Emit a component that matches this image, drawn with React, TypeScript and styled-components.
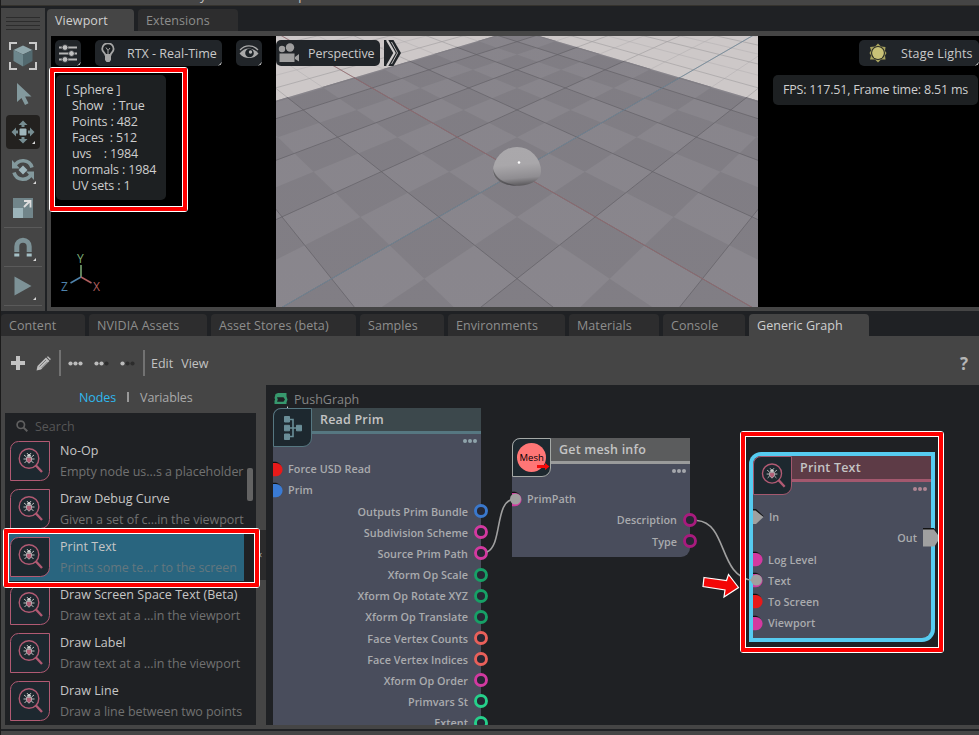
import React from 'react';
import styled, { createGlobalStyle, css } from 'styled-components';

const GlobalStyle = createGlobalStyle`
  * { box-sizing: border-box; }
  html, body { margin: 0; padding: 0; background: #1f2124; }
  body { font-family: "Open Sans", "Noto Sans", sans-serif; font-size: 12.5px; font-weight: 500; overflow: hidden; }
  svg { display: block; flex: none; }
`;

const Page = styled.div`
  position: relative;
  width: 979px;
  height: 735px;
  overflow: hidden;
  display: flex;
  flex-direction: column;
  background: #1f2124;
  border-left: 1px solid #1b1b1b;
`;

/* ---------- frame ---------- */
const MenuStrip = styled.div`
  height: 6px;
  flex: none;
  overflow: hidden;
  background: #454545;
  border-bottom: 1px solid #35332e;
  color: #c8c8c8;
  display: flex;
  padding-left: 199px;
  gap: 92px;
  line-height: 14px;
  span { margin-top: -11px; }
`;

const Upper = styled.div`
  height: 303px;
  margin-top: 2px;
  flex: none;
  display: flex;
  gap: 2px;
`;

const ToolColumn = styled.div`
  width: 44px;
  background: #454545;
  display: flex;
  flex-direction: column;
  align-items: center;
  padding-top: 9px;
`;

const Grip = styled.div`
  width: 34px;
  height: 14px;
  margin-bottom: 8px;
  background: repeating-linear-gradient(#2c2c2c 0 1px, #454545 1px 4px);
`;

const ToolButton = styled.div<{ $active?: boolean; $h?: number }>`
  width: 34px;
  height: ${p => p.$h ?? 38}px;
  display: flex;
  align-items: center;
  justify-content: center;
  ${p => p.$active && css`background: #23211f; border-radius: 4px;`}
`;

const ToolDivider = styled.div`
  width: 38px;
  height: 1px;
  background: #5a5a5a;
`;

const ViewportPanel = styled.div`
  flex: 1;
  display: flex;
  flex-direction: column;
`;

const TabRow = styled.div<{ $h: number }>`
  height: ${p => p.$h}px;
  flex: none;
  display: flex;
  align-items: flex-end;
  gap: 4px;
`;

const Tab = styled.div<{ $w: number; $on?: boolean }>`
  width: ${p => p.$w}px;
  height: 22px;
  padding-left: 8px;
  line-height: 23px;
  letter-spacing: 0.08px;
  white-space: nowrap;
  border-radius: 4px 4px 0 0;
  background: ${p => (p.$on ? '#454545' : '#2d2d2e')};
  color: ${p => (p.$on ? '#cfcfcf' : '#8d8d8d')};
`;

const ViewFrame = styled.div`
  flex: 1;
  background: #454545;
  padding: 5px 0 4px 4px;
`;

const View = styled.div`
  position: relative;
  height: 271px;
  background: #000;
  padding-left: 225px;
`;

const Hud = styled.div`
  position: absolute;
  inset: 0;
  padding: 4px 0 0 4px;
`;

const HudBar = styled.div`
  display: flex;
  height: 26px;
  gap: 14px;
`;

const Pill = styled.div<{ $w: number; $corner?: boolean }>`
  position: relative;
  width: ${p => p.$w}px;
  height: 26px;
  flex: none;
  display: flex;
  align-items: center;
  gap: 10px;
  border-radius: 5px;
  background: #212529;
  color: #c9c9c9;
  white-space: nowrap;
  overflow: hidden;
  ${p => p.$corner && css`
    &::after {
      content: '';
      position: absolute;
      right: 0;
      bottom: 0;
      border: 2.5px solid;
      border-color: transparent #e6e6e6 #e6e6e6 transparent;
    }
  `}
`;
const IconPill = styled(Pill)`justify-content: center;`;
const RtxPill = styled(Pill)`padding-left: 6px; gap: 12px;`;
const CameraPill = styled(Pill)`padding-left: 1px; gap: 9px; letter-spacing: -0.05px;`;
const LightPill = styled(Pill)`padding-left: 9px; gap: 13px; letter-spacing: 0.15px;`;
const CameraGroup = styled.div`display: flex; gap: 4px;`;
const Spring = styled.div`flex: 1;`;

const HudInfo = styled.div`
  display: flex;
  justify-content: space-between;
  align-items: flex-start;
  margin-top: 9px;
  padding: 0 1px;
`;

const Info = styled.div`
  width: 110px;
  height: 125px;
  padding: 7px 0 0 10px;
  border-radius: 5px;
  background: #1d2022;
  color: #cecece;
  line-height: 16px;
  letter-spacing: -0.15px;
  white-space: pre;
`;
const InfoLine = styled.div<{ $in?: boolean }>`padding-left: ${p => (p.$in ? 6 : 0)}px;`;

const Fps = styled.div`
  width: 205px;
  height: 30px;
  line-height: 29px;
  padding-left: 10px;
  border-radius: 5px;
  background: #1d2022;
  color: #cecece;
  letter-spacing: -0.2px;
  white-space: nowrap;
`;

const Gizmo = styled.div`
  position: absolute;
  left: 8px;
  bottom: 14px;
`;

/* ---------- graph panel ---------- */
const Lower = styled.div`
  height: 393px;
  flex: none;
  background: #454545;
  display: flex;
  flex-direction: column;
`;

const GraphBar = styled.div`
  height: 49px;
  flex: none;
  display: flex;
  align-items: center;
  padding: 5px 11px 0 10px;
  color: #c2c2c2;
`;
const Sep = styled.div`width: 2px; height: 26px; background: #727272;`;
const MenuLabel = styled.span<{ $ml: number }>`margin-left: ${p => p.$ml}px;`;
const Slot = styled.div<{ $ml: number }>`margin-left: ${p => p.$ml}px;`;
const Help = styled.span`margin-left: auto; font-weight: 700; font-size: 17px; color: #b5b5b5;`;

const GraphBody = styled.div`
  height: 340px;
  display: flex;
`;

const Side = styled.div`
  width: 265px;
  display: flex;
  flex-direction: column;
  position: relative;
`;
const SideTabs = styled.div`
  height: 28px;
  padding-left: 78px;
  display: flex;
  gap: 11px;
  line-height: 26px;
  letter-spacing: -0.1px;
  color: #a9a9a9;
  b { font-weight: 500; color: #2fb8ee; }
  i { width: 2px; height: 10px; margin-top: 7px; background: #999; }
`;
const Palette = styled.div`
  width: 251px;
  height: 312px;
  margin-left: 4px;
  background: #1f2124;
  overflow: hidden;
  position: relative;
`;
const Search = styled.div`
  height: 24px;
  padding: 2px 0 0 11px;
  display: flex;
  align-items: center;
  gap: 7px;
  color: #565656;
`;
const Item = styled.div<{ $on?: boolean }>`
  height: 48px;
  width: 239px;
  padding: 4px 0 4px 5px;
  display: flex;
  gap: 10px;
  white-space: nowrap;
  background: ${p => (p.$on ? '#29657f' : 'transparent')};
  color: #c6c6c6;
`;
const Title = styled.div`
  line-height: 20px;
  letter-spacing: 0.03px;
`;
const Sub = styled.div<{ $on?: boolean }>`
  line-height: 22px;
  letter-spacing: -0.05px;
  color: ${p => (p.$on ? '#64777e' : '#717171')};
`;
const Thumb = styled.div`
  position: absolute;
  right: 3px;
  top: 55px;
  width: 6px;
  height: 33px;
  border-radius: 2px;
  background: #636363;
`;
const Collapse = styled.div`
  position: absolute;
  right: 0;
  top: 145px;
  width: 7px;
  height: 50px;
  background: #2b2b2c;
  color: #aaa;
  font-size: 10px;
  line-height: 48px;
`;

const Canvas = styled.div`
  flex: 1;
  position: relative;
  overflow: hidden;
  background: #1f2124;
`;
const Crumb = styled.div`
  display: flex;
  gap: 6px;
  padding: 8px 0 0 8px;
  color: #858585;
  line-height: 14px;
`;
const Wires = styled.svg`
  position: absolute;
  left: 0;
  top: 0;
`;

const NodeBox = styled.div<{ $x: number; $y: number; $w: number; $h: number; $sel?: boolean }>`
  position: absolute;
  left: ${p => p.$x}px;
  top: ${p => p.$y}px;
  width: ${p => p.$w}px;
  height: ${p => p.$h}px;
  background: #494d5c;
  border-radius: 8px 0 9px 0;
  ${p => p.$sel && css`box-shadow: 0 0 0 4px #56cbf0;`}
`;
const Head = styled.div<{ $bg: string; $line: string }>`
  height: 26px;
  margin-left: 39px;
  padding-left: 8px;
  background: ${p => p.$bg};
  border-bottom: 3px solid ${p => p.$line};
  color: #c4c4c4;
  font-weight: 600;
  font-size: 12.5px;
  letter-spacing: 0.2px;
  line-height: 23px;
`;
const Badge = styled.div<{ $c: string }>`
  position: absolute;
  left: 0;
  top: 0;
  width: 39px;
  height: 39px;
  border: 1px solid ${p => p.$c};
  border-radius: 8px 0 9px 0;
  background: #1d282f;
  display: flex;
  align-items: center;
  justify-content: center;
`;
const More = styled.div<{ $c: string }>`
  display: flex;
  justify-content: flex-end;
  gap: 1px;
  padding: 5px 4px 0 0;
  height: 14px;
  i { width: 4px; height: 4px; border-radius: 2px; background: ${p => p.$c}; }
`;
const Ports = styled.div`padding-top: 10.2px;`;
const PortRow = styled.div<{ $out?: boolean }>`
  height: 21.17px;
  display: flex;
  align-items: center;
  justify-content: ${p => (p.$out ? 'flex-end' : 'flex-start')};
  gap: ${p => (p.$out ? 6 : 4)}px;
  margin-right: ${p => (p.$out ? -7 : 0)}px;
  color: #aaabae;
  font-size: 10.8px;
  font-weight: 600;
  letter-spacing: 0.04px;
  white-space: nowrap;
`;

const Frame = styled.div<{ $x: number; $y: number; $w: number; $h: number }>`
  position: absolute;
  left: ${p => p.$x}px;
  top: ${p => p.$y}px;
  width: ${p => p.$w}px;
  height: ${p => p.$h}px;
  border: 1px solid #fff;
  border-radius: 3px;
  &::before { content: ''; position: absolute; inset: 0; border: 4px solid #fe0000; border-radius: 1px; }
  &::after { content: ''; position: absolute; inset: 4px; border: 1px solid #fff; }
`;
const ArrowMark = styled.svg`
  position: absolute;
  left: 698px;
  top: 570px;
`;
const BottomLine = styled.div`height: 2px; background: #1f2124; flex: none;`;
const BottomBar = styled.div`flex: 1; background: #454545;`;

/* ---------- 3D scene ---------- */
const project = (a: number, b: number): [number, number] => {
  const n = (a + b) / 2;
  const m = (a - b) / 2;
  const d = 7.448 + n;
  return [241 + (m * 505) / d, -155.8 + 2171 / d];
};
const pts = (list: [number, number][]) =>
  list.map(([a, b]) => project(a, b).map(v => v.toFixed(1)).join(',')).join(' ');

const EDGE = 7.1;
const darkTiles: string[] = [];
for (let a = -8; a <= 7; a++)
  for (let b = -8; b <= 7; b++) {
    if ((a + b) / 2 < -5 || (a + b) % 2 !== 0) continue;
    const a1 = Math.min(a + 1, EDGE);
    const b1 = Math.min(b + 1, EDGE);
    darkTiles.push(pts([[a, b], [a1, b], [a1, b1], [a, b1]]));
  }
const floorLine = (k: number, from: number, to: number) => [
  pts([[k, from], [k, to]]),
  pts([[from, k], [to, k]]),
];
const range = (lo: number, hi: number) => Array.from({ length: hi - lo + 1 }, (_, i) => lo + i);
const start = (k: number) => Math.max(-14 - k + 2, -12);

const Scene = () => (
  <svg width="482" height="271" viewBox="0 0 482 271">
    <defs>
      <linearGradient id="ball" x1="0.45" y1="0" x2="0.55" y2="1">
        <stop offset="0" stopColor="#aaa8ab" />
        <stop offset="0.45" stopColor="#a9a7aa" />
        <stop offset="0.8" stopColor="#8f8d91" />
        <stop offset="1" stopColor="#5a585b" />
      </linearGradient>
      <linearGradient id="fog" x1="0" y1="0" x2="0" y2="1">
        <stop offset="0" stopColor="#777479" stopOpacity="0.25" />
        <stop offset="0.4" stopColor="#777479" stopOpacity="0" />
      </linearGradient>
    </defs>
    <rect width="482" height="271" fill="#cdc8c8" />
    {range(-5, 14).flatMap(k => floorLine(k, start(k), 30)).map((p, i) => (
      <polyline key={i} points={p} stroke="#a5a2a4" strokeWidth={i % 4 < 2 ? 0.35 : 0.7} fill="none" />
    ))}
    <polygon points={pts([[-6.5, -6.5], [EDGE, -6.5], [EDGE, EDGE], [-6.5, EDGE]])} fill="#8d8a91" />
    {darkTiles.map((p, i) => <polygon key={i} points={p} fill="#838087" />)}
    {range(-3, 3).flatMap(k => floorLine(k * 2, start(k * 2), EDGE)).map((p, i) => (
      <polyline key={i} points={p} stroke="#605e64" strokeWidth="0.75" fill="none" />
    ))}
    <polygon points={pts([[-6.5, -6.5], [EDGE, -6.5], [EDGE, EDGE], [-6.5, EDGE]])} fill="url(#fog)" />
    <polyline points={pts([[-6, 0], [24, 0]])} stroke="#70899a" strokeWidth="0.8" fill="none" />
    <polyline points={pts([[0, -6], [0, 24]])} stroke="#96696f" strokeWidth="0.8" fill="none" />
    <path d="M217 135.500A24 24.500 0 0 1 265 135.500C265 144 254 149.800 241 149.800S217 144 217 135.500Z" fill="url(#ball)" />
    <path d="M217.200 133C216.500 142 225 149.800 241 149.800 227 147 219.500 142 217.200 133Z" fill="#454346" opacity="0.6" />
    <circle cx="243" cy="126.500" r="1.300" fill="#fff" />
  </svg>
);

/* ---------- icons ---------- */
const corner = <path d="M30 28v3h-3z" fill="#d8d8d8" />;

const SelectIcon = () => (
  <svg width="28" height="28" viewBox="0 0 28 28">
    <path d="M1 8V1h7M20 1h7v7M27 20v7h-7M8 27H1v-7" fill="none" stroke="#c9c9c9" strokeWidth="2" />
    <path d="M14 3.500 23.500 8 14 12.500 4.500 8z" fill="#8fa6ab" />
    <path d="M4.500 8 14 12.500V24.500L4.500 19z" fill="#6d878d" />
    <path d="M23.500 8 14 12.500V24.500L23.500 19z" fill="#52696f" />
  </svg>
);
const PointerIcon = () => (
  <svg width="34" height="34" viewBox="0 0 34 34">
    <path d="M11 6v19l4.500-4 3.500 7 3.500-1.700-3.400-6.800H25.500z" fill="#83999d" />
  </svg>
);
const MoveIcon = () => (
  <svg width="34" height="34" viewBox="0 0 34 34">
    <rect x="13.500" y="13.500" width="7" height="7" rx="1" fill="#9fb6bc" />
    <path d="M17 5.500 21.500 10H18.500v2h-3v-2H12.500zM17 28.500 12.500 24h3v-2h3v2h3zM5.500 17 10 12.500v3h2v3h-2v3zM28.500 17 24 21.500v-3h-2v-3h2v-3z" fill="#768d92" />
    <path d="M29 26v3h-3z" fill="#d8d8d8" />
  </svg>
);
const RotateIcon = () => (
  <svg width="34" height="34" viewBox="0 0 34 34">
    <path d="M8.500 13.500A9.300 9.300 0 0 1 26 14.500M25.500 20.500A9.300 9.300 0 0 1 8 19.500" fill="none" stroke="#83999d" strokeWidth="3.600" />
    <path d="M6 7v8.500h8zM28 27v-8.500h-8z" fill="#83999d" />
    <path d="M17 12.500 21.500 17 17 21.500 12.500 17z" fill="#9fb6bc" />
    {corner}
  </svg>
);
const ScaleIcon = () => (
  <svg width="34" height="34" viewBox="0 0 34 34">
    <rect x="7" y="6" width="20" height="20" fill="#71858a" />
    <rect x="7" y="16" width="10" height="10" fill="#9cb4ba" />
    <path d="M18 15l6-6M18 9h6.500v6.500" fill="none" stroke="#dedede" strokeWidth="1.800" />
  </svg>
);
const MagnetIcon = () => (
  <svg width="34" height="34" viewBox="0 0 34 34">
    <path d="M10.800 22V16.500a6.200 6.200 0 0 1 12.400 0V22" fill="none" stroke="#7d9297" strokeWidth="5" />
    <path d="M8.300 23.500h5v3h-5zM20.700 23.500h5v3h-5z" fill="#a5c0c6" />
    {corner}
  </svg>
);
const PlayIcon = () => (
  <svg width="34" height="34" viewBox="0 0 34 34">
    <path d="M8.500 7.500v19L25.500 17z" fill="#7d9297" />
    {corner}
  </svg>
);
const SlidersIcon = () => (
  <svg width="20" height="20" viewBox="0 0 20 20">
    <path d="M1 4.500h18M1 10.500h18M1 16.500h18" stroke="#b5b5b5" strokeWidth="2" />
    <g fill="#c0c0c0" stroke="#212529" strokeWidth=".8">
      <circle cx="7" cy="4.500" r="2.900" /><circle cx="13.500" cy="10.500" r="2.900" /><circle cx="7" cy="16.500" r="2.900" />
    </g>
  </svg>
);
const BulbIcon = () => (
  <svg width="14" height="20" viewBox="0 0 14 20">
    <path d="M4.500 12C4 9.500 1.200 8.800 1.200 6A5.600 5.600 0 0 1 12.600 6C12.600 8.800 10 9.500 9.500 12z" fill="#1b1f22" stroke="#a6a6a6" strokeWidth="1.800" />
    <path d="M7 11V7.500L5 4.500M7 7.500l2-2.500" stroke="#a6a6a6" fill="none" />
    <path d="M4 12.500h6v4.500L8.500 19h-3L4 17z" fill="#a6a6a6" />
  </svg>
);
const EyeIcon = () => (
  <svg width="20" height="16" viewBox="0 0 20 16">
    <path d="M.5 8.500C5 2 14 1.500 19.500 8.500 15 14.500 5 14.500.5 8.500Z" fill="#a9a9a9" />
    <circle cx="10.500" cy="8" r="4.300" fill="#1c2226" />
    <circle cx="11.500" cy="7" r="1.700" fill="#b5b5b5" />
    <path d="M1 5C6-.5 14-.5 19 5" stroke="#a9a9a9" strokeWidth="1.300" fill="none" />
  </svg>
);
const CameraIcon = () => (
  <svg width="22" height="20" viewBox="0 0 22 20">
    <circle cx="5" cy="6" r="3.200" fill="#9f9f9f" /><circle cx="13" cy="4.500" r="4.200" fill="#9f9f9f" />
    <path d="M2.500 10.500h15v8.500h-15zM18 14l4-3v7.500l-4-2.500z" fill="#9f9f9f" />
  </svg>
);
const ChevronIcon = () => (
  <svg width="17" height="26" viewBox="0 0 17 26">
    <path d="M0 0H9.500L17 13 9.500 26H0z" fill="#212529" />
    <path d="M3 0 10.500 13 3 26" stroke="#cfcccc" strokeWidth="2.200" fill="none" />
    <path d="M7.500 2 13.500 13 7.500 24" stroke="#c8c6c6" strokeWidth="0.900" fill="none" />
  </svg>
);
const SunIcon = () => (
  <svg width="20" height="20" viewBox="0 0 20 20">
    <path d="M10 .5 13 3.500 17.500 4 17 8 18.500 10 17 12.500 17.500 16.500 13 16.500 10 19.500 7 16.500 2 16.500 3 12.500 1.500 10 3 7.500 2 4 7 3.500z" fill="#a8a35e" />
    <circle cx="10" cy="10" r="7" fill="#292b25" /><circle cx="10" cy="10" r="5.900" fill="#c9c277" />
  </svg>
);
const AxisIcon = () => (
  <svg width="44" height="44" viewBox="0 0 44 44" fontFamily="Open Sans" fontSize="12">
    <path d="M22 28V16" stroke="#7fae78" strokeWidth="1.500" />
    <path d="M22 28 11.500 34" stroke="#4f83ac" strokeWidth="1.500" />
    <path d="M22 28 32.500 34" stroke="#b05e5e" strokeWidth="1.500" />
    <text x="18" y="14" fill="#7fae78">Y</text>
    <text x="2" y="41.500" fill="#4f83ac">Z</text>
    <text x="34" y="41.500" fill="#b05e5e">X</text>
  </svg>
);
const PlusIcon = () => (
  <svg width="14" height="14" viewBox="0 0 14 14"><path d="M7 0v14M0 7h14" stroke="#c2c2c2" strokeWidth="4" /></svg>
);
const PencilIcon = () => (
  <svg width="15" height="15" viewBox="0 0 15 15">
    <path d="M.5 14.500 1.500 10 10 1.500 13.500 5 5 13.500z" fill="#bdbdbd" />
    <path d="M10.800 1 12 .2 14.800 3 14 4.200z" fill="#bdbdbd" />
    <path d="M3.500 10.500 10 4M5.500 12l6-6" stroke="#666" strokeWidth=".8" />
  </svg>
);
const Dots = ({ on }: { on: number }) => (
  <svg width="15" height="5" viewBox="0 0 15 5">
    {[0, 1, 2].map(i => <circle key={i} cx={2.5 + i * 5} cy="2.500" r="2.100" fill={i < on ? '#bcbcbc' : '#2c2c2c'} />)}
  </svg>
);
const SearchIcon = () => (
  <svg width="12" height="12" viewBox="0 0 12 12" fill="none" stroke="#5f5f5f" strokeWidth="1.700">
    <circle cx="4.800" cy="4.800" r="3.700" /><path d="m7.600 7.600 3.700 3.700" strokeWidth="2" />
  </svg>
);
const BugGlyph = () => (
  <g>
    <circle cx="19" cy="17.500" r="9.800" fill="none" stroke="#b15a73" strokeWidth="1.400" />
    <path d="m25.500 24 6.500 7" stroke="#b15a73" strokeWidth="2.400" />
    <path d="M17 12l1 1.500h2l1-1.500M14 14l2.500 2M24 14l-2.500 2M13.500 18h3M21.500 18h3M14.500 22l2-2M23.500 22l-2-2" stroke="#cfcfcf" strokeWidth="0.900" fill="none" />
    <path d="M16.500 16.500h5v3.300L19 22.300 16.500 19.800z" fill="#b15a73" stroke="#cfcfcf" strokeWidth=".7" />
    <path d="M17.200 13.800h3.600v2h-3.600z" fill="#cfcfcf" />
  </g>
);
const BugTile = () => (
  <svg width="40" height="40" viewBox="0 0 40 40">
    <path d="M8.500 .5h31v30a9 9 0 0 1-9 9H.5V8.500a8 8 0 0 1 8-8z" fill="#1d282f" stroke="#b15a73" />
    <BugGlyph />
  </svg>
);
const TreeIcon = () => (
  <svg width="20" height="26" viewBox="0 0 20 26">
    <path d="M5 4.500h5v17H5M5 13h12" fill="none" stroke="#6a8e98" strokeWidth="1.600" />
    <path d="M1.500 1.500h5v5.500h-5zM1.500 10.300h5v5.500h-5zM1.500 19h5v5.500h-5zM13.500 10.300h5v5.500h-5z" fill="#6a8e98" stroke="#6a8e98" strokeLinejoin="round" />
  </svg>
);
const MeshIcon = () => (
  <svg width="37" height="37" viewBox="0 0 37 37">
    <circle cx="18.500" cy="18.500" r="14.500" fill="#ff7676" />
    <text x="18.700" y="22.300" textAnchor="middle" fontFamily="Open Sans" fontSize="9.500" fill="#000">Mesh</text>
    <path d="M24 26h8v-2l4.500 3.500L32 31v-2h-8z" fill="#f40808" />
  </svg>
);
const GraphIcon = () => (
  <svg width="14" height="15" viewBox="0 0 14 15">
    <path d="M1.500 1 4 0h8.500v3.500l1 3-1 3V11H.5V8l.6-1.500L.5 5z" fill="#37986d" />
    <path d="M3 4.300h6.500l1.500 2.200-1.500 2.300H3l.8-2.300z" fill="#1f2124" />
    <path d="M14.500 11.500V15h-1.500z" fill="#fff" />
  </svg>
);

/* ---------- ports ---------- */
const OutRing = ({ c }: { c: string }) => (
  <svg width="14" height="14" viewBox="0 0 14 14"><circle cx="7" cy="7" r="5.500" fill="#262834" stroke={c} strokeWidth="2.900" /></svg>
);
const InHalf = ({ c, linked }: { c: string; linked?: boolean }) => (
  <svg width="11" height="16" viewBox="0 0 11 16" overflow="visible">
    <path d="M0 .8h3a7.200 7.200 0 0 1 0 14H0z" fill="#111" />
    <path d="M0 2h3a6.600 6.600 0 0 1 0 13.200H0z" fill={c} />
    {linked && <circle cx="3.500" cy="8" r="5.500" fill="#a0a0a0" />}
  </svg>
);
const ExecIn = () => (
  <svg width="12" height="16" viewBox="0 0 12 16"><path d="M0 0h3l8 7.500H0z" fill="#111" /><path d="M0 1.500h2.500L10.500 8 3 15H0z" fill="#a0a0a0" /></svg>
);
const ExecOut = () => (
  <svg width="15" height="19" viewBox="0 0 15 19"><path d="M0 0h11l3 5H0z" fill="#111" /><path d="M0 1.500h11L15 7v6l-3.500 5.500H0z" fill="#a0a0a0" /></svg>
);

const palette: [string, string][] = [
  ['No-Op', 'Empty node us...s a placeholder'],
  ['Draw Debug Curve', 'Given a set of c...in the viewport'],
  ['Print Text', 'Prints some te...r to the screen'],
  ['Draw Screen Space Text (Beta)', 'Draw text at a ...in the viewport'],
  ['Draw Label', 'Draw text at a ...in the viewport'],
  ['Draw Line', 'Draw a line between two points'],
];
const primOutputs: [string, string][] = [
  ['Outputs Prim Bundle', '#3a78cc'],
  ['Subdivision Scheme', '#d239a0'],
  ['Source Prim Path', '#d239a0'],
  ['Xform Op Scale', '#17a066'],
  ['Xform Op Rotate XYZ', '#17a066'],
  ['Xform Op Translate', '#17a066'],
  ['Face Vertex Counts', '#e9605a'],
  ['Face Vertex Indices', '#e9605a'],
  ['Xform Op Order', '#d239a0'],
  ['Primvars St', '#26d08a'],
  ['Extent', '#26d08a'],
];
const bottomTabs: [string, number][] = [
  ['Content', 84], ['NVIDIA Assets', 118], ['Asset Stores (beta)', 145], ['Samples', 84],
  ['Environments', 117], ['Materials', 90], ['Console', 82], ['Generic Graph', 120],
];

const More3 = ({ c }: { c: string }) => <More $c={c}><i /><i /><i /></More>;

export default function App() {
  return (
    <>
      <GlobalStyle />
      <Page>
        <MenuStrip><span>y</span><span>p</span></MenuStrip>
        <Upper>
          <ToolColumn>
            <Grip />
            <ToolButton $h={34}><SelectIcon /></ToolButton>
            <ToolButton $h={42}><PointerIcon /></ToolButton>
            <ToolButton $h={34} $active><MoveIcon /></ToolButton>
            <ToolButton $h={42}><RotateIcon /></ToolButton>
            <ToolButton $h={36}><ScaleIcon /></ToolButton>
            <ToolDivider />
            <ToolButton><MagnetIcon /></ToolButton>
            <ToolDivider />
            <ToolButton><PlayIcon /></ToolButton>
            <ToolDivider />
          </ToolColumn>
          <ViewportPanel>
            <TabRow $h={23}>
              <Tab $w={87} $on>Viewport</Tab>
              <Tab $w={100}>Extensions</Tab>
            </TabRow>
            <ViewFrame>
              <View>
                <Scene />
                <Hud>
                  <HudBar>
                    <IconPill $w={26} $corner><SlidersIcon /></IconPill>
                    <RtxPill $w={127} $corner><BulbIcon />RTX - Real-Time</RtxPill>
                    <IconPill $w={26} $corner><EyeIcon /></IconPill>
                    <CameraGroup>
                      <CameraPill $w={104}><CameraIcon />Perspective</CameraPill>
                      <ChevronIcon />
                    </CameraGroup>
                    <Spring />
                    <LightPill $w={120} $corner><SunIcon />Stage Lights</LightPill>
                  </HudBar>
                  <HudInfo>
                    <Info>
                      <InfoLine>[ Sphere ]</InfoLine>
                      <InfoLine $in>{'Show   : True'}</InfoLine>
                      <InfoLine $in>Points : 482</InfoLine>
                      <InfoLine $in>{'Faces  : 512'}</InfoLine>
                      <InfoLine $in>{'uvs    : 1984'}</InfoLine>
                      <InfoLine $in>normals : 1984</InfoLine>
                      <InfoLine $in>UV sets : 1</InfoLine>
                    </Info>
                    <Fps>FPS: 117.51, Frame time: 8.51 ms</Fps>
                  </HudInfo>
                </Hud>
                <Gizmo><AxisIcon /></Gizmo>
              </View>
            </ViewFrame>
          </ViewportPanel>
        </Upper>
        <TabRow $h={25}>
          {bottomTabs.map(([t, w], i) => <Tab key={t} $w={w} $on={i === 7}>{t}</Tab>)}
        </TabRow>
        <Lower>
          <GraphBar>
            <PlusIcon />
            <Slot $ml={11}><PencilIcon /></Slot>
            <Slot $ml={8}><Sep /></Slot>
            <Slot $ml={7}><Dots on={3} /></Slot>
            <Slot $ml={11}><Dots on={2} /></Slot>
            <Slot $ml={11}><Dots on={1} /></Slot>
            <Slot $ml={8}><Sep /></Slot>
            <MenuLabel $ml={6}>Edit</MenuLabel>
            <MenuLabel $ml={8}>View</MenuLabel>
            <Help>?</Help>
          </GraphBar>
          <GraphBody>
            <Side>
              <SideTabs><b>Nodes</b><i /><span>Variables</span></SideTabs>
              <Palette>
                <Search><SearchIcon />Search</Search>
                {palette.map(([t, s], i) => (
                  <Item key={t} $on={i === 2}>
                    <BugTile />
                    <div><Title>{t}</Title><Sub $on={i === 2}>{s}</Sub></div>
                  </Item>
                ))}
                <Thumb />
              </Palette>
              <Collapse>‹</Collapse>
            </Side>
            <Canvas>
              <Crumb><GraphIcon />PushGraph</Crumb>
              <NodeBox $x={7} $y={23} $w={208} $h={330}>
                <Head $bg="#3c484c" $line="#567781">Read Prim</Head>
                <Badge $c="#567781"><TreeIcon /></Badge>
                <More3 c="#8fa3ab" />
                <Ports>
                  <PortRow><InHalf c="#e81a1a" />Force USD Read</PortRow>
                  <PortRow><InHalf c="#3a7bd5" />Prim</PortRow>
                  {primOutputs.map(([t, c]) => <PortRow key={t} $out>{t}<OutRing c={c} /></PortRow>)}
                </Ports>
              </NodeBox>
              <NodeBox $x={246} $y={53} $w={178} $h={119}>
                <Head $bg="#5b5c5d" $line="#9a9b9b">Get mesh info</Head>
                <Badge $c="#a5a9a6"><MeshIcon /></Badge>
                <More3 c="#a5a7ac" />
                <Ports>
                  <PortRow><InHalf c="#d239a0" linked />PrimPath</PortRow>
                  <PortRow $out>Description<OutRing c="#a81b7d" /></PortRow>
                  <PortRow $out>Type<OutRing c="#a81b7d" /></PortRow>
                </Ports>
              </NodeBox>
              <NodeBox $x={487} $y={71} $w={178} $h={182} $sel>
                <Head $bg="#5d3b46" $line="#a3586e">Print Text</Head>
                <Badge $c="#a3586e">
                  <svg width="37" height="37" viewBox="0.500 0.500 38 38"><BugGlyph /></svg>
                </Badge>
                <More3 c="#b08593" />
                <Ports>
                  <PortRow><ExecIn />In</PortRow>
                  <PortRow $out>Out<ExecOut /></PortRow>
                  <PortRow><InHalf c="#d239a0" />Log Level</PortRow>
                  <PortRow><InHalf c="#d239a0" linked />Text</PortRow>
                  <PortRow><InHalf c="#e81a1a" />To Screen</PortRow>
                  <PortRow><InHalf c="#d239a0" />Viewport</PortRow>
                </Ports>
              </NodeBox>
              <Wires width="713" height="340" viewBox="266 385 713 340" fill="none" stroke="#a0a0a0" strokeWidth="1.600">
                <path d="M487 552C503 545 494 499 515 499" />
                <path d="M697 520.500C728 523 718 577 753 580.500" />
              </Wires>
            </Canvas>
          </GraphBody>
        </Lower>
        <BottomLine />
        <BottomBar />
        <Frame $x={48} $y={67} $w={139} $h={145} />
        <Frame $x={2} $y={528} $w={257} $h={60} />
        <Frame $x={739} $y={431} $w={204} $h={222} />
        <ArrowMark width="44" height="32" viewBox="699 570 44 32">
          <path d="M704 577.500 726.500 580.500 728.500 574.500 738.500 587.500 724 597 725 590 703 586.500z" fill="#f40606" stroke="#fff" strokeWidth="1.200" />
        </ArrowMark>
      </Page>
    </>
  );
}
